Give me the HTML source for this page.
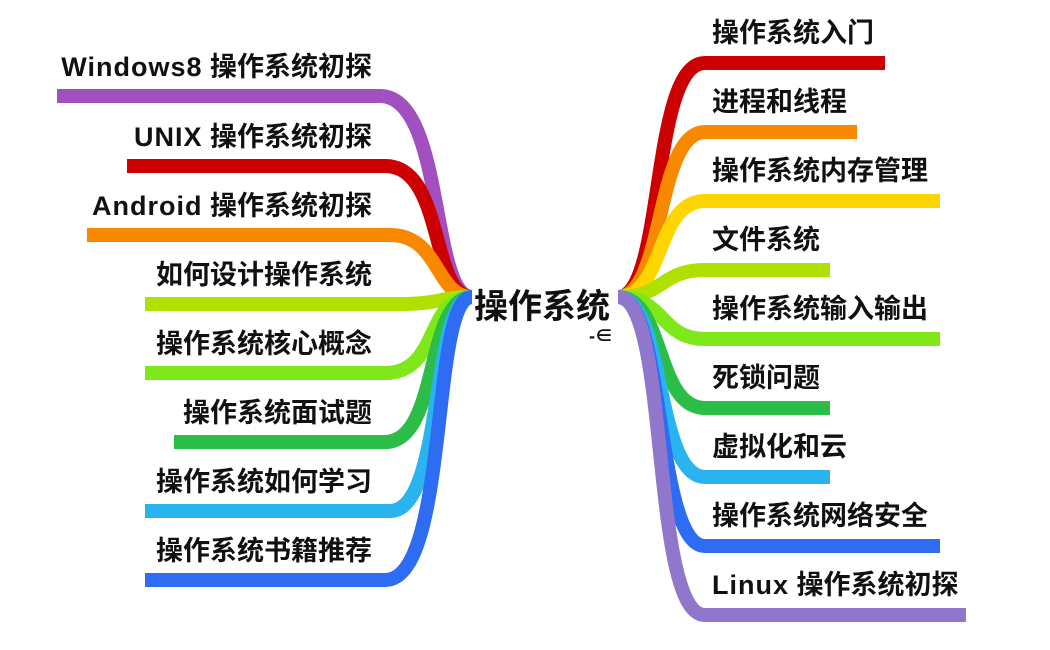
<!DOCTYPE html>
<html><head><meta charset="utf-8"><style>
html,body{margin:0;padding:0;background:#fff;width:1050px;height:650px;overflow:hidden;position:relative}
.t{position:absolute;font-family:"Liberation Sans","Noto Sans CJK SC",sans-serif;font-weight:bold;font-size:27px;line-height:30px;color:#111;white-space:nowrap}
.l{text-align:right;right:678px}
.r{left:712px}
.e{letter-spacing:1px}
</style></head><body>
<svg width="1050" height="650" style="position:absolute;left:0;top:0" fill="none" stroke-width="14">
<path d="M57 96 L380 96 C445 96 430 297 472 297" stroke="#a24fbf"/>
<path d="M127 166 L385 166 C445 166 430 297 472 297" stroke="#cc0000"/>
<path d="M87 235 L390 235 C440 235 435 297 472 297" stroke="#f78800"/>
<path d="M145 304 L400 304 C440 304 440 297 472 297" stroke="#aee000"/>
<path d="M145 373 L385 373 C440 373 425 297 472 297" stroke="#7ee81a"/>
<path d="M174 442 L385 442 C440 442 425 297 472 297" stroke="#2cbd48"/>
<path d="M145 511 L390 511 C445 511 430 297 472 297" stroke="#29b3ef"/>
<path d="M145 580 L385 580 C450 580 430 297 472 297" stroke="#2f6cf4"/>
<path d="M618 297 C665 297 650 63 705 63 L885 63" stroke="#cc0000"/>
<path d="M618 297 C665 297 655 132 705 132 L857 132" stroke="#f78800"/>
<path d="M618 297 C665 297 655 201 705 201 L940 201" stroke="#ffd500"/>
<path d="M618 297 C665 297 660 270 705 270 L830 270" stroke="#aee000"/>
<path d="M618 297 C665 297 660 339 705 339 L940 339" stroke="#7ee81a"/>
<path d="M618 297 C665 297 655 408 705 408 L830 408" stroke="#2cbd48"/>
<path d="M618 297 C665 297 655 477 705 477 L830 477" stroke="#29b3ef"/>
<path d="M618 297 C665 297 655 546 705 546 L940 546" stroke="#2f6cf4"/>
<path d="M618 297 C670 297 650 615 705 615 L966 615" stroke="#9077cc"/>
</svg>
<div class="t" style="left:474px;top:287px;font-size:34px;line-height:40px">操作系统</div>
<div class="t" style="left:589px;top:326px;font-size:18px;line-height:20px">-∈</div>

<div class="t l" style="top:52px"><span class="e">Windows8</span> 操作系统初探</div>
<div class="t l" style="top:122px"><span class="e">UNIX</span> 操作系统初探</div>
<div class="t l" style="top:191px"><span class="e">Android</span> 操作系统初探</div>
<div class="t l" style="top:260px">如何设计操作系统</div>
<div class="t l" style="top:329px">操作系统核心概念</div>
<div class="t l" style="top:398px">操作系统面试题</div>
<div class="t l" style="top:467px">操作系统如何学习</div>
<div class="t l" style="top:536px">操作系统书籍推荐</div>

<div class="t r" style="top:18px">操作系统入门</div>
<div class="t r" style="top:87px">进程和线程</div>
<div class="t r" style="top:156px">操作系统内存管理</div>
<div class="t r" style="top:225px">文件系统</div>
<div class="t r" style="top:294px">操作系统输入输出</div>
<div class="t r" style="top:363px">死锁问题</div>
<div class="t r" style="top:432px">虚拟化和云</div>
<div class="t r" style="top:501px">操作系统网络安全</div>
<div class="t r" style="top:570px"><span class="e">Linux</span> 操作系统初探</div>
</body></html>
